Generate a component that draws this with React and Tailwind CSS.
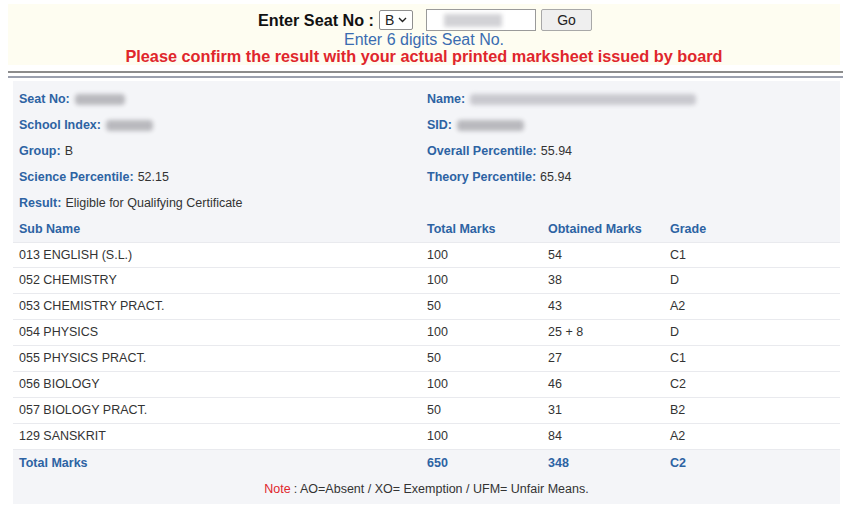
const info = [
  [{ label: 'Seat No:', blur: 'w-[50px]' }, { label: 'Name:', blur: 'w-[226px]', light: true }],
  [{ label: 'School Index:', blur: 'w-[47px]' }, { label: 'SID:', blur: 'w-[67px]' }],
  [{ label: 'Group:', value: 'B' }, { label: 'Overall Percentile:', value: '55.94' }],
  [{ label: 'Science Percentile:', value: '52.15' }, { label: 'Theory Percentile:', value: '65.94' }],
]

const subjects = [
  ['013 ENGLISH (S.L.)', '100', '54', 'C1'],
  ['052 CHEMISTRY', '100', '38', 'D'],
  ['053 CHEMISTRY PRACT.', '50', '43', 'A2'],
  ['054 PHYSICS', '100', '25 + 8', 'D'],
  ['055 PHYSICS PRACT.', '50', '27', 'C1'],
  ['056 BIOLOGY', '100', '46', 'C2'],
  ['057 BIOLOGY PRACT.', '50', '31', 'B2'],
  ['129 SANSKRIT', '100', '84', 'A2'],
]

const cols = 'grid grid-cols-[408px_121px_122px_1fr] h-[26px] items-center'

function Field({ f }) {
  return (
    <div className="flex items-center pl-[6px]">
      <span className="font-bold text-[#2d63a3]">{f.label}</span>
      {f.blur ? (
        <span className={`ml-[5px] h-[11px] rounded-sm blur-[2px] ${f.blur} ${f.light ? 'bg-[#c9c9cf]' : 'bg-[#b9b9be]'}`} />
      ) : (
        <span className="ml-[4px]">{f.value}</span>
      )}
    </div>
  )
}

export default function App() {
  return (
    <div className="w-[860px] h-[511px] bg-white pt-1 font-['Liberation_Sans',Arial,sans-serif] text-[#333]">
      {/* seat number search box */}
      <div className="ml-2 mr-5 bg-[#fefdf1] pt-[5px] pb-px flex flex-col items-center">
        <div className="flex items-center h-[22px] ml-[2px]">
          <span className="text-[16.2px] font-bold text-[#111]">Enter Seat No :</span>
          <div className="ml-[5px] w-[34px] h-[20px] border border-[#8f8f8f] rounded-[2px] bg-white flex items-center pl-[5px] text-[14px] text-[#222]">
            B
            <svg className="ml-[4px]" width="9" height="6" viewBox="0 0 9 6"><path d="M1 1l3.5 3.5L8 1" fill="none" stroke="#222" strokeWidth="1.4" /></svg>
          </div>
          <div className="ml-[13px] w-[110px] h-[22px] border border-[#9a9a9a] bg-white flex items-center pl-[17px]">
            <span className="w-[58px] h-[13px] bg-[#d2d2d6] blur-[2px]" />
          </div>
          <button className="ml-[5px] w-[51px] h-[22px] border border-[#a8a8a8] rounded-[2px] bg-[#efefef] text-[14px] text-[#222]">Go</button>
        </div>
        <div className="text-[16px] leading-[17px] text-[#3a6cb0]">Enter 6 digits Seat No.</div>
        <div className="text-[16.3px] leading-[16px] font-bold text-[#e0262c]">Please confirm the result with your actual printed marksheet issued by board</div>
      </div>

      <div className="ml-2 mr-[17px] mt-[6px] h-[7px] border-t-2 border-b-2 border-t-[#8c8c8c] border-b-[#9ba0ae]" />

      {/* result panel */}
      <div className="ml-[13px] mt-[3px] w-[827px] h-[423px] bg-[#f4f5f8] pt-[5px] text-[12.5px]">
        {info.map((row, i) => (
          <div key={i} className="grid grid-cols-[408px_1fr] h-[26px] items-center">
            <Field f={row[0]} />
            <Field f={row[1]} />
          </div>
        ))}
        <div className="h-[26px] flex items-center pl-[6px]">
          <span className="font-bold text-[#2d63a3]">Result:</span>
          <span className="ml-[4px]">Eligible for Qualifying Certificate</span>
        </div>

        <div className={`${cols} font-bold text-[#2d63a3]`}>
          <div className="pl-[6px]">Sub Name</div>
          <div className="pl-[6px]">Total Marks</div>
          <div className="pl-[6px]">Obtained Marks</div>
          <div className="pl-[6px]">Grade</div>
        </div>

        {subjects.map((s, i) => (
          <div key={i} className={`${cols} bg-white border-b border-[#e9eaee] ${i === 0 ? 'border-t' : ''}`}>
            {s.map((c, j) => (
              <div key={j} className="pl-[6px]">{c}</div>
            ))}
          </div>
        ))}

        <div className={`${cols} font-bold text-[#2d63a3]`}>
          <div className="pl-[6px]">Total Marks</div>
          <div className="pl-[6px]">650</div>
          <div className="pl-[6px]">348</div>
          <div className="pl-[6px]">C2</div>
        </div>

        <div className="h-[26px] flex items-center justify-center">
          <span className="text-[#e0262c]">Note</span>
          <span className="ml-[3px]">: AO=Absent / XO= Exemption / UFM= Unfair Means.</span>
        </div>
      </div>
    </div>
  )
}
